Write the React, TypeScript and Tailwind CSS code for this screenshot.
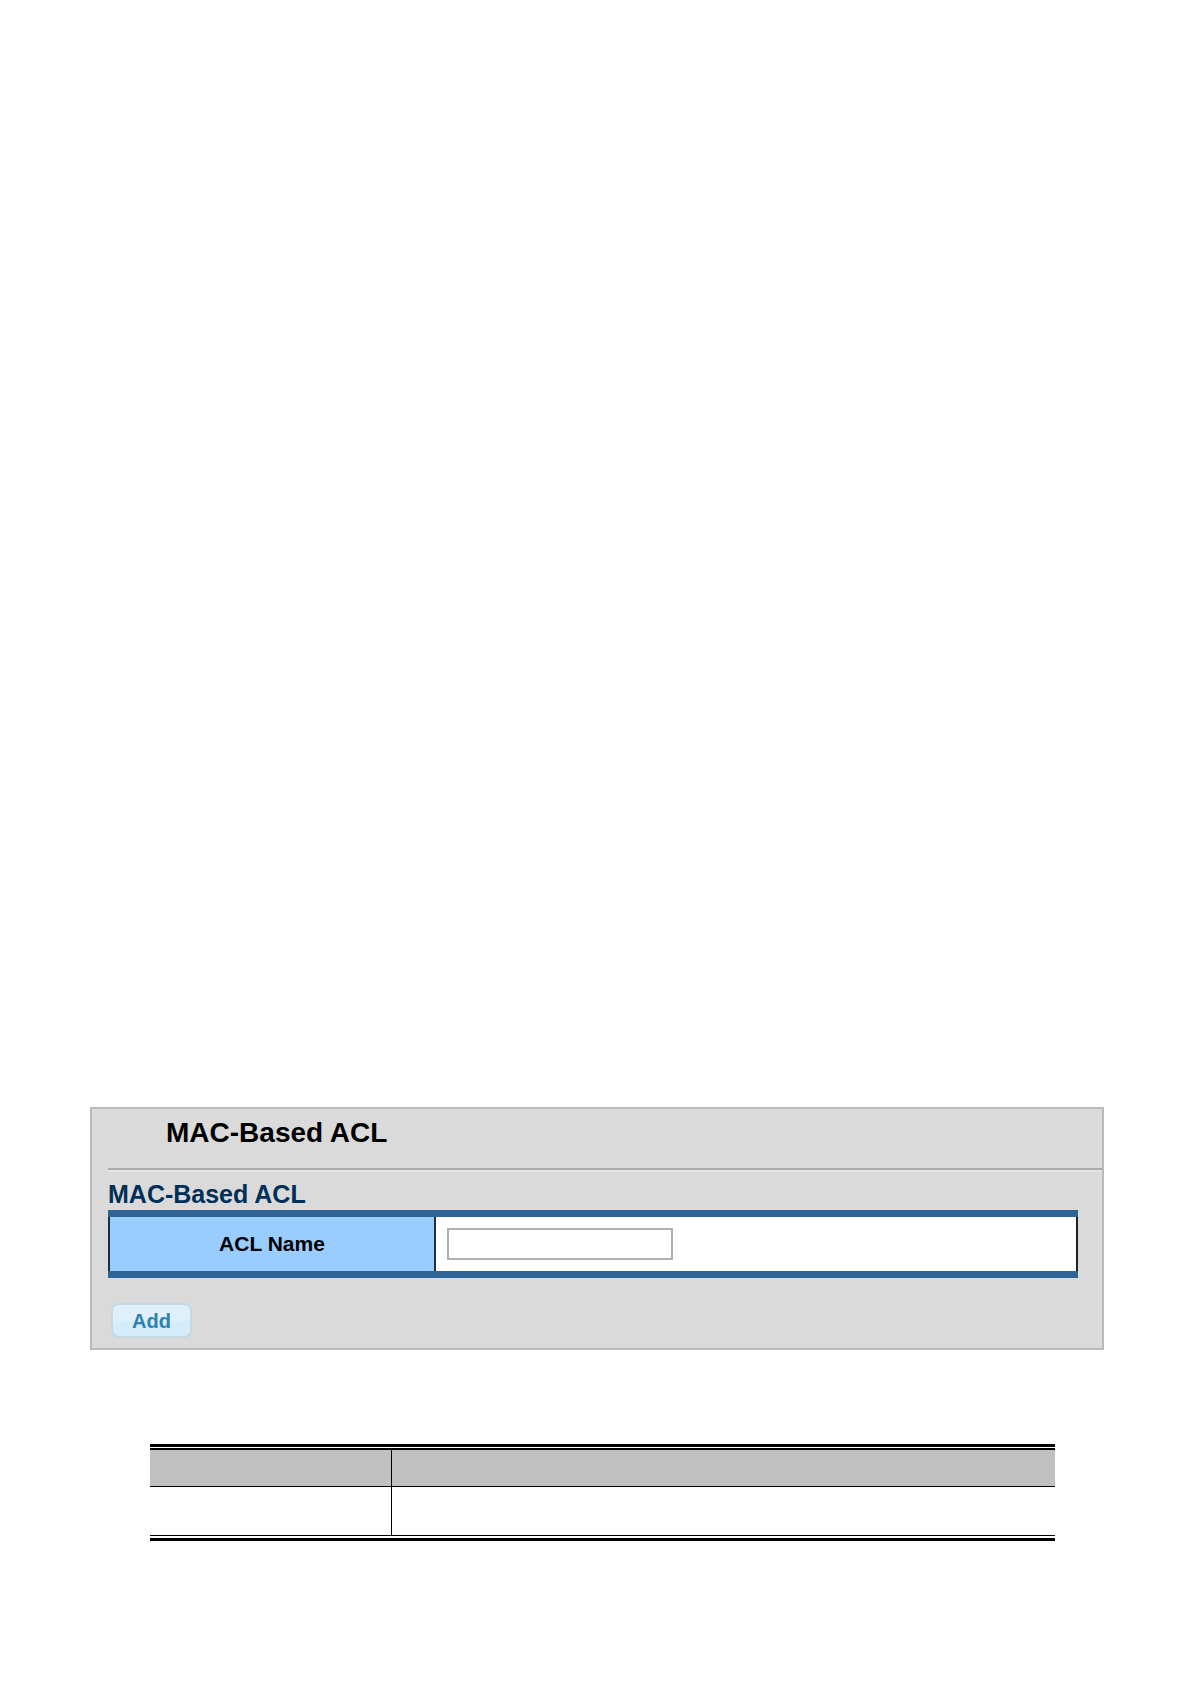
// App.tsx
// ─────────────────────────────────────────────────────────────
// MAC-BASED ACL — settings panel with the ACL name form,
// followed by the (still empty) object / description table.
// ─────────────────────────────────────────────────────────────

import { useState } from "react";

function AclPanel() {
  const [name, setName] = useState("");

  return (
    <section className="border-2 border-[#bababa] bg-[#dadada] pb-[10px] pl-4">
      <h1 className="pl-[58px] pt-2 text-[28px] leading-8 font-bold text-black">MAC-Based ACL</h1>
      <hr className="mt-[19px] border-t-2 border-b-2 border-t-[#aaaaaa] border-b-[#e4e4e4]" />

      <form onSubmit={(e) => e.preventDefault()}>
        <h2 className="mt-[6px] text-[25px] leading-8 font-bold text-[#003058]">MAC-Based ACL</h2>

        {/* ── NAME ROW ──────────────────────────────────────── */}
        <div className="mr-6 border-y-7 border-[#2e6496]">
          <table className="w-full border-separate border-spacing-0">
            <tbody>
              <tr>
                <th
                  scope="row"
                  className="h-[54px] w-[328px] border-x-2 border-[#1c3040] bg-[#99ccff] p-0 text-center text-[21px] leading-6 font-bold text-black"
                >
                  <label htmlFor="acl-name">ACL Name</label>
                </th>
                <td className="border-r-2 border-[#202020] bg-white px-[11px] py-0">
                  <input
                    id="acl-name"
                    type="text"
                    value={name}
                    onChange={(e) => setName(e.target.value)}
                    className="block h-8 w-[226px] border-2 border-[#b0b0b0] bg-white px-2 text-lg outline-none"
                  />
                </td>
              </tr>
            </tbody>
          </table>
        </div>

        {/* ── ADD BUTTON ────────────────────────────────────── */}
        <button
          type="submit"
          className="mt-[25px] ml-[3px] block h-[35px] w-[81px] rounded-lg border-2 border-[#c4d9e4] bg-linear-to-b from-[#e0f0fa] from-50% to-[#d5edfb] to-50% text-[20px] leading-6 font-bold text-[#2e80b2]"
        >
          Add
        </button>
      </form>
    </section>
  );
}

function DescriptionTable() {
  return (
    <div className="border-y-3 border-black pt-px pb-[2px]">
      <table className="w-full border-separate border-spacing-0 border-t-2 border-b border-black">
        <thead>
          <tr className="h-[37px] bg-[#c0c0c0]">
            <th className="w-[242px] border-r border-b border-black p-0" />
            <th className="border-b border-black p-0" />
          </tr>
        </thead>
        <tbody>
          <tr className="h-12">
            <td className="border-r border-black p-0" />
            <td className="p-0" />
          </tr>
        </tbody>
      </table>
    </div>
  );
}

export default function App() {
  return (
    <main className="flex min-h-screen flex-col justify-end bg-white pr-[87px] pb-[143px] pl-[90px] font-['Liberation_Sans',Arial,sans-serif]">
      <AclPanel />
      <div className="mt-[94px] mr-[49px] ml-[60px]">
        <DescriptionTable />
      </div>
    </main>
  );
}
